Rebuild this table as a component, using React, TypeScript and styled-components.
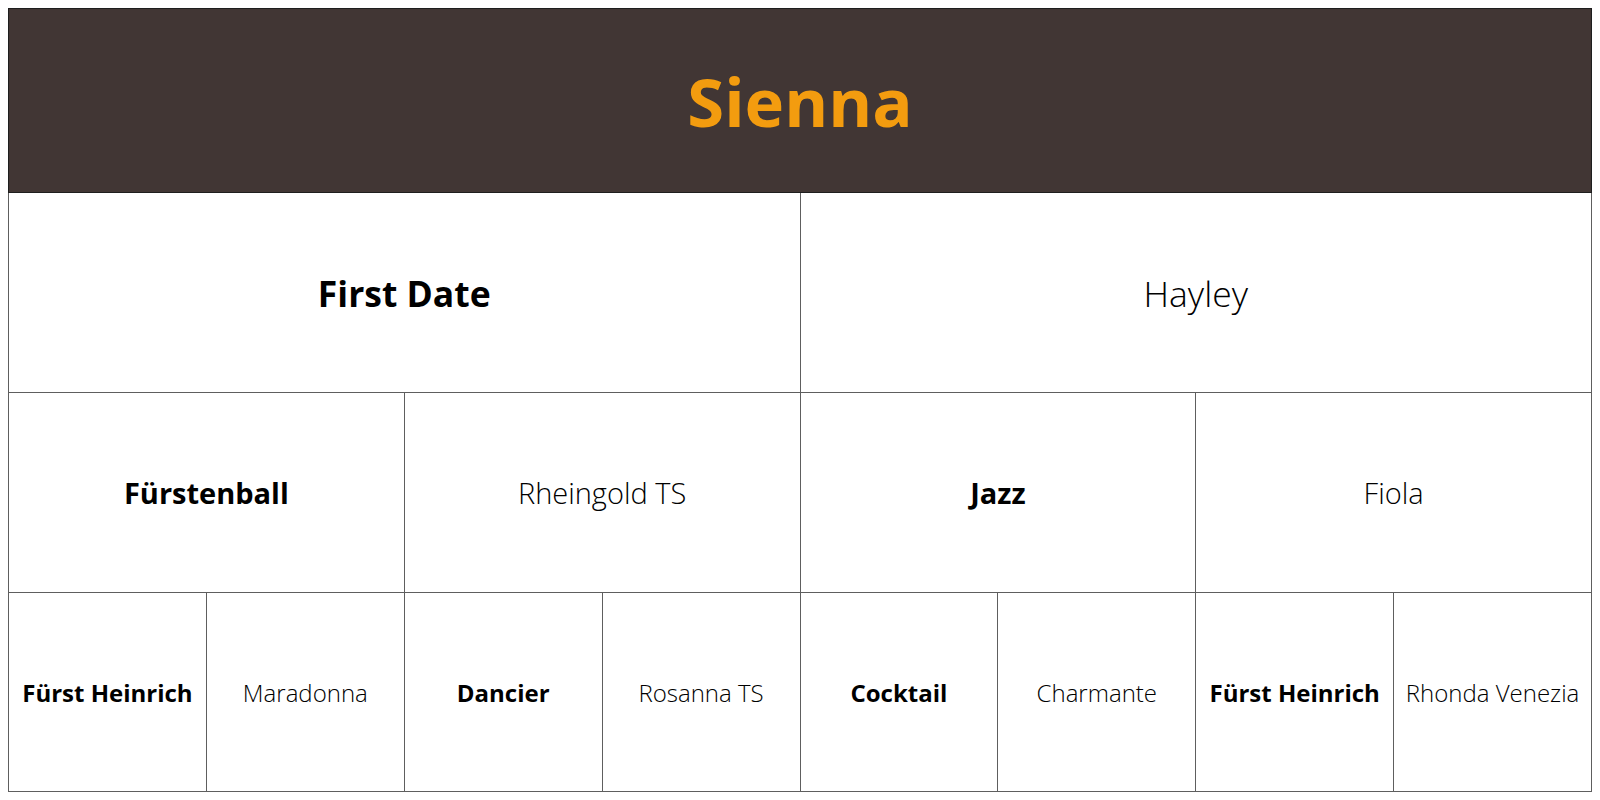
import React from 'react';
import styled, { createGlobalStyle } from 'styled-components';

const GlobalStyle = createGlobalStyle`
  body {
    margin: 8px;
    background: #ffffff;
    font-family: "Open Sans", "Liberation Sans", sans-serif;
  }
`;

const Pedigree = styled.table`
  width: 100%;
  border-collapse: collapse;
  table-layout: fixed;
  border: 1px solid #5e5e5e;
`;

const TitleCell = styled.th`
  height: 183px;
  background: #413634;
  color: #f39c0f;
  font-size: 67px;
  font-weight: 700;
  text-align: center;
  border: 1px solid #1e1e1e;
  padding: 0;
`;

const Cell = styled.td<{ $male: boolean; $size: number; $height: number }>`
  height: ${({ $height }) => $height}px;
  border: 1px solid #5e5e5e;
  text-align: center;
  vertical-align: middle;
  padding: 0 4px;
  color: #000000;
  font-size: ${({ $size }) => $size}px;
  font-weight: ${({ $male }) => ($male ? 700 : 300)};
  white-space: nowrap;
`;

interface Horse {
  name: string;
  male: boolean;
}

const parents: Horse[] = [
  { name: 'First Date', male: true },
  { name: 'Hayley', male: false },
];

const grandParents: Horse[] = [
  { name: 'Fürstenball', male: true },
  { name: 'Rheingold TS', male: false },
  { name: 'Jazz', male: true },
  { name: 'Fiola', male: false },
];

const greatGrandParents: Horse[] = [
  { name: 'Fürst Heinrich', male: true },
  { name: 'Maradonna', male: false },
  { name: 'Dancier', male: true },
  { name: 'Rosanna TS', male: false },
  { name: 'Cocktail', male: true },
  { name: 'Charmante', male: false },
  { name: 'Fürst Heinrich', male: true },
  { name: 'Rhonda Venezia', male: false },
];

export default function App() {
  return (
    <>
      <GlobalStyle />
      <Pedigree>
        <colgroup>
          {greatGrandParents.map((_, i) => (
            <col key={i} />
          ))}
        </colgroup>
        <thead>
          <tr>
            <TitleCell colSpan={8}>Sienna</TitleCell>
          </tr>
        </thead>
        <tbody>
          <tr>
            {parents.map((h, i) => (
              <Cell key={i} colSpan={4} $male={h.male} $size={35.5} $height={199}>
                {h.name}
              </Cell>
            ))}
          </tr>
          <tr>
            {grandParents.map((h, i) => (
              <Cell key={i} colSpan={2} $male={h.male} $size={29} $height={199}>
                {h.name}
              </Cell>
            ))}
          </tr>
          <tr>
            {greatGrandParents.map((h, i) => (
              <Cell key={i} $male={h.male} $size={24} $height={198}>
                {h.name}
              </Cell>
            ))}
          </tr>
        </tbody>
      </Pedigree>
    </>
  );
}
